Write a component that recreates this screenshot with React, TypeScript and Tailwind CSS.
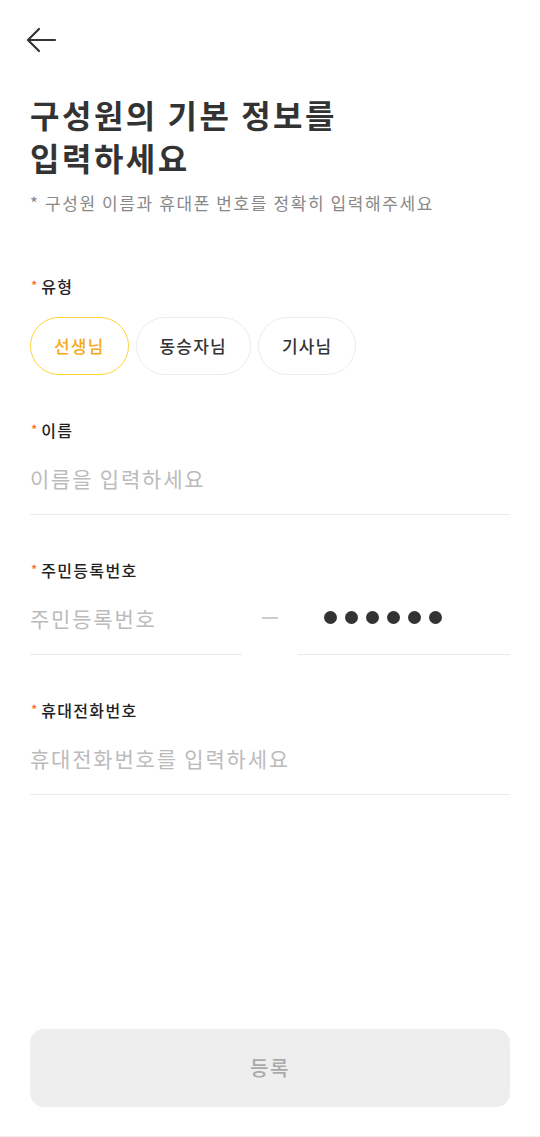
import React from "react";

const FONT = { fontFamily: '"Noto Sans CJK KR", "Noto Sans", sans-serif' };

function Label({ text }: { text: string }) {
  return (
    <div className="flex items-start h-[22px] text-[16px] leading-[22px] font-medium text-[#222] tracking-[1.3px]">
      <span className="text-[#ff6a1f] text-[13px] leading-[13px] mt-[4px] ml-[1px] mr-[4px] tracking-normal">*</span>
      <span>{text}</span>
    </div>
  );
}

export default function App() {
  const [type, setType] = React.useState("선생님");
  const types = ["선생님", "동승자님", "기사님"];
  return (
    <div style={FONT} className="w-[540px] min-h-[1137px] bg-white flex flex-col border-b border-[#f0f0f0]">
      <header className="h-[80px] flex items-center px-[26px]">
        <svg width="31" height="26" viewBox="0 0 31 26" fill="none" stroke="#333" strokeWidth="2.2" strokeLinecap="round" strokeLinejoin="round">
          <path d="M29 13H2.5" />
          <path d="M13 2L2 13l11 11" />
        </svg>
      </header>

      <main className="px-[30px] flex flex-col">
        <h1 className="mt-[13px] text-[32px] leading-[43px] font-bold text-[#333] tracking-[2.5px]">
          구성원의 기본 정보를
          <br />
          입력하세요
        </h1>
        <p className="mt-[12px] text-[17px] leading-[24px] text-[#888] tracking-[1.6px]">* 구성원 이름과 휴대폰 번호를 정확히 입력해주세요</p>

        <div className="mt-[60px]">
          <Label text="유형" />
          <div className="mt-[20px] flex gap-[7px]">
            {types.map((t) => (
              <button
                key={t}
                onClick={() => setType(t)}
                className={
                  type === t
                    ? "h-[58px] px-[23px] rounded-full border-[1.5px] border-[#ffd23f] text-[#f7a81b] text-[17px] tracking-[1.2px] font-medium bg-white"
                    : "h-[58px] px-[23px] rounded-full border border-[#ececec] text-[#333] text-[17px] tracking-[1.2px] font-medium bg-white"
                }
              >
                {t}
              </button>
            ))}
          </div>
        </div>

        <div className="mt-[44px]">
          <Label text="이름" />
          <input
            placeholder="이름을 입력하세요"
            className="w-full h-[74px] border-b border-[#ebebeb] text-[21px] tracking-[1.8px] outline-none placeholder:text-[#bbb] text-[#333]"
          />
        </div>

        <div className="mt-[44px]">
          <Label text="주민등록번호" />
          <div className="flex items-center">
            <input
              placeholder="주민등록번호"
              className="w-[212px] h-[74px] border-b border-[#ebebeb] text-[21px] tracking-[1.8px] outline-none placeholder:text-[#bbb] text-[#333]"
            />
            <div className="flex-1 flex justify-center">
              <div className="w-[16px] h-[1.5px] bg-[#cccccc]" />
            </div>
            <div className="w-[212px] h-[74px] border-b border-[#ebebeb] flex items-center pl-[26px] gap-[8px]">
              {[0, 1, 2, 3, 4, 5].map((i) => (
                <span key={i} className="w-[13px] h-[13px] rounded-full bg-[#333]" />
              ))}
            </div>
          </div>
        </div>

        <div className="mt-[44px]">
          <Label text="휴대전화번호" />
          <input
            placeholder="휴대전화번호를 입력하세요"
            className="w-full h-[74px] border-b border-[#ebebeb] text-[21px] tracking-[1.8px] outline-none placeholder:text-[#bbb] text-[#333]"
          />
        </div>
      </main>

      <footer className="mt-auto px-[30px] pb-[29px]">
        <button className="w-full h-[78px] rounded-[14px] bg-[#eeeeee] text-[20px] tracking-[1.6px] text-[#aaa] font-medium">등록</button>
      </footer>
    </div>
  );
}
